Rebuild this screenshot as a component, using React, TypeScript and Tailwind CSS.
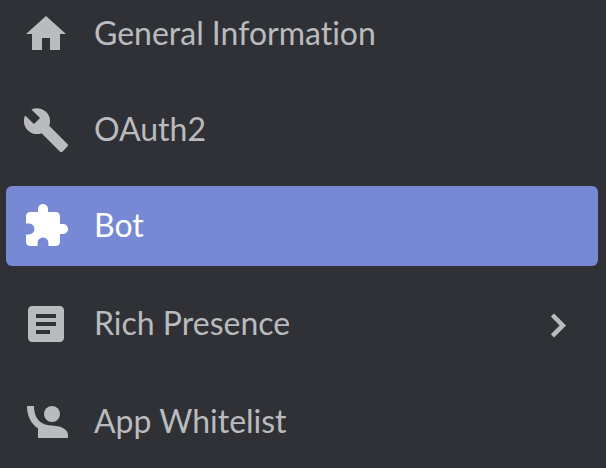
import type { ReactNode } from "react";

type Item = { label: string; icon: ReactNode; active?: boolean; expandable?: boolean };

function Icon({ children }: { children: ReactNode }) {
  return (
    <svg viewBox="0 0 24 24" fill="currentColor" aria-hidden="true" className="size-12 shrink-0">
      {children}
    </svg>
  );
}

const appItems: Item[] = [
  {
    label: "General Information",
    icon: <path d="M10 20v-6h4v6h5v-8h3L12 3 2 12h3v8z" />,
  },
  {
    label: "OAuth2",
    icon: (
      <path d="M22.7 19l-9.1-9.1c.9-2.3.4-5-1.5-6.9-2-2-5-2.4-7.4-1.3L9 6 6 9 1.6 4.7C.4 7.1.9 10.1 2.9 12.1c1.9 1.9 4.6 2.4 6.9 1.5l9.1 9.1c.4.4 1 .4 1.4 0l2.3-2.3c.5-.4.5-1.1.1-1.4z" />
    ),
  },
  {
    label: "Bot",
    active: true,
    icon: (
      <path d="M20.5 11H19V7c0-1.1-.9-2-2-2h-4V3.5C13 2.12 11.88 1 10.5 1S8 2.12 8 3.5V5H4c-1.1 0-1.99.9-1.99 2v3.8H3.5c1.49 0 2.7 1.21 2.7 2.7s-1.21 2.7-2.7 2.7H2V20c0 1.1.9 2 2 2h3.8v-1.5c0-1.49 1.21-2.7 2.7-2.7s2.7 1.21 2.7 2.7V22H17c1.1 0 2-.9 2-2v-4h1.5c1.38 0 2.5-1.12 2.5-2.5S21.88 11 20.5 11z" />
    ),
  },
];

const accessItems: Item[] = [
  {
    label: "Rich Presence",
    expandable: true,
    icon: (
      <path d="M19 3H5c-1.1 0-2 .9-2 2v14c0 1.1.9 2 2 2h14c1.1 0 2-.9 2-2V5c0-1.1-.9-2-2-2zm-5 14H7v-2h7v2zm3-4H7v-2h10v2zm0-4H7V7h10v2z" />
    ),
  },
  {
    label: "App Whitelist",
    icon: (
      <>
        <circle cx="15" cy="8" r="4" />
        <path d="M2.5 4H6c0 3.4 1 6 2.9 7.7 1.7 1.5 3.6 1.9 6.1 2.1 2.6.2 4.7.6 6.2 1.7 1.2.9 1.8 1.8 1.8 3V20H8v-4.8C4.500 12.900 2.500 9 2.500 4z" />
      </>
    ),
  },
];

function NavList({ items, className }: { items: Item[]; className: string }) {
  return (
    <ul className={className}>
      {items.map((item) => (
        <li key={item.label}>
          <a
            href="#"
            aria-current={item.active ? "page" : undefined}
            className={
              "flex h-20 items-center gap-6 rounded-md px-4 " +
              (item.active ? "bg-[#7789d4] text-white" : "text-[#b9bbbe]")
            }
          >
            <Icon>{item.icon}</Icon>
            <span className="grow pb-0.5 whitespace-nowrap">{item.label}</span>
            {item.expandable && (
              <Icon>
                <path d="M10 6.700L8.400 8.300 12.800 12.700l-4.400 4.400L10 18.700l6-6z" />
              </Icon>
            )}
          </a>
        </li>
      ))}
    </ul>
  );
}

export default function App() {
  return (
    <div className="min-h-screen overflow-hidden bg-[#303136] font-['Lato',sans-serif] text-[32px] leading-10 [font-variant-ligatures:none]">
      <nav aria-label="Application settings" className="-mt-1.5 flex flex-col gap-[18px] pr-2 pb-1.5 pl-1.5">
        <NavList items={appItems} className="flex flex-col gap-4" />
        <NavList items={accessItems} className="flex flex-col gap-[18px]" />
      </nav>
    </div>
  );
}
